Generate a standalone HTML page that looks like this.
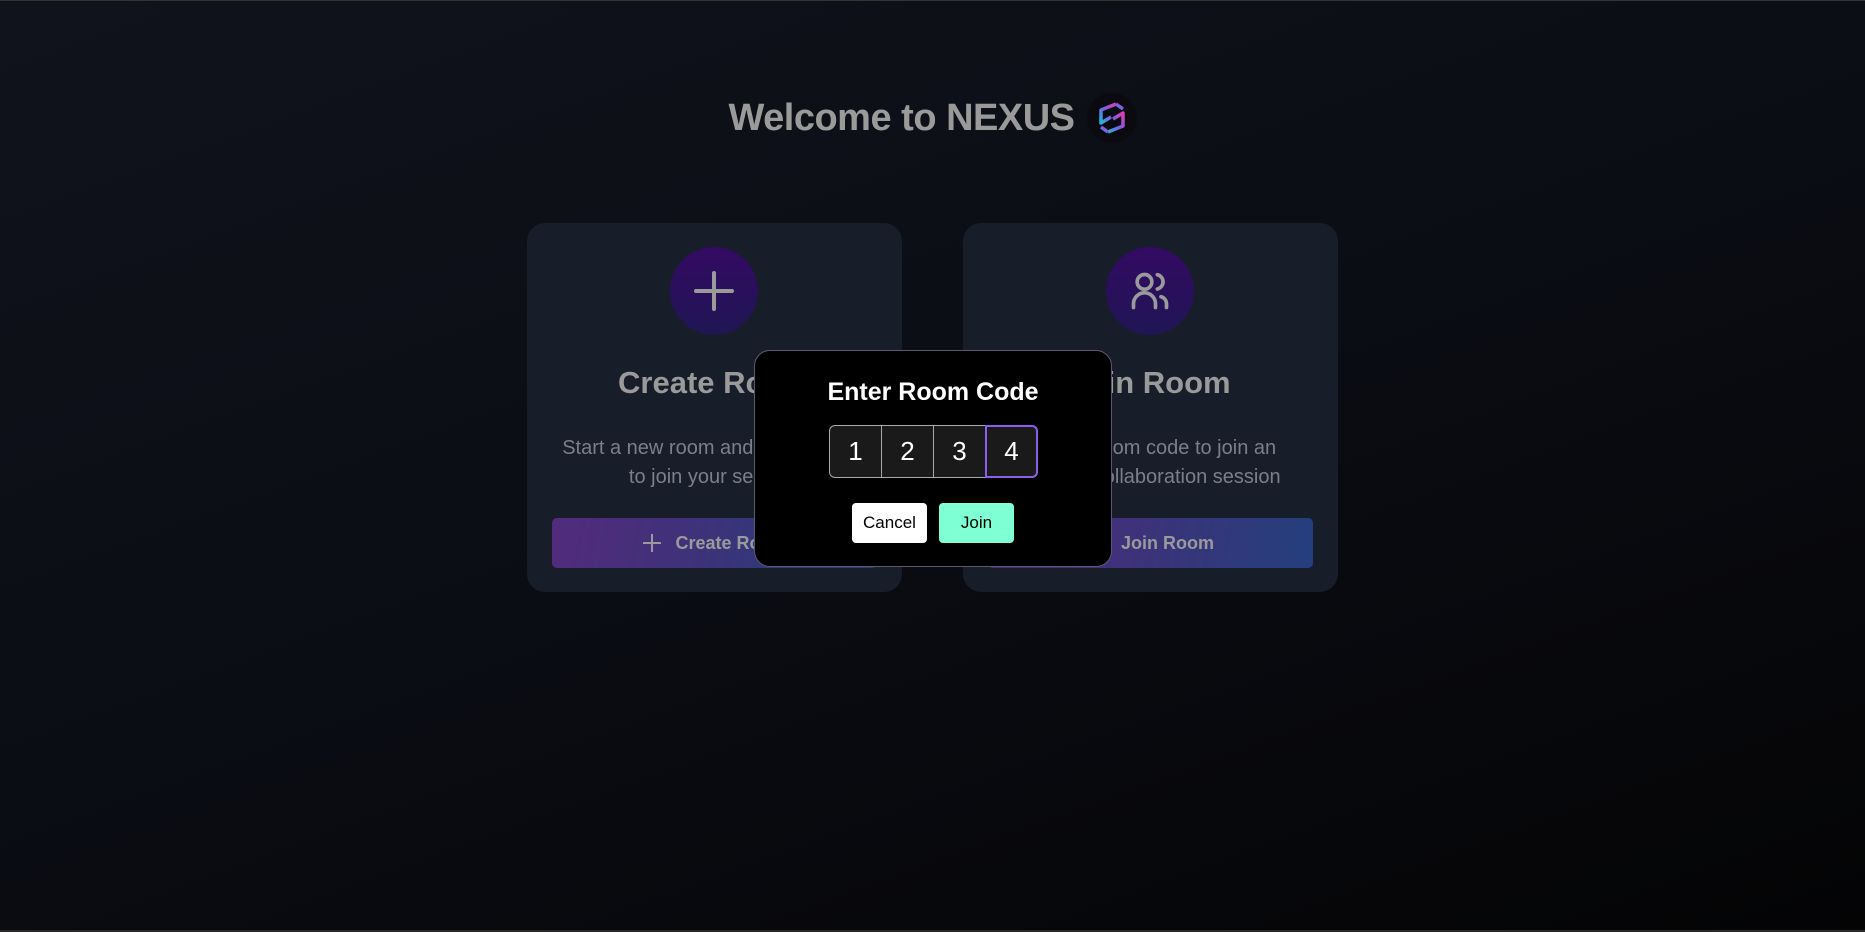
<!DOCTYPE html>
<html><head><meta charset="utf-8"><style>
*{box-sizing:border-box;margin:0;padding:0}
html,body{width:1865px;height:932px;overflow:hidden}
body{background:linear-gradient(160deg,#10131c 0%,#0b0d14 50%,#040405 100%);font-family:"Liberation Sans",sans-serif;position:relative;border-top:1px solid #333;border-bottom:2px solid #2a2a2a}
.title{position:absolute;top:90px;left:0;width:1865px;text-align:center;color:#9a9a9a;font-size:38px;font-weight:bold;letter-spacing:-0.5px;line-height:50px}
.title span{display:inline-block;vertical-align:middle}
.logo{width:50px;height:50px;border-radius:50%;background:#0a0a10;margin-left:12px;position:relative;line-height:0}
.logo svg{position:absolute;left:9px;top:8px;display:block}
.card{position:absolute;top:222px;width:375px;height:369px;background:#181d2a;border-radius:18px}
.ic{position:absolute;left:143px;top:24px;width:88px;height:88px;border-radius:50%;background:linear-gradient(#340a63,#1f1654);display:flex;align-items:center;justify-content:center}
.ct{position:absolute;top:142px;width:100%;text-align:center;color:#9a9a9a;font-size:31px;font-weight:bold}
.cd{position:absolute;top:211px;left:20px;right:20px;text-align:center;color:#7b7f88;font-size:20px;line-height:29px}
.btn{position:absolute;left:25px;right:25px;top:295px;height:50px;border-radius:5px;background:linear-gradient(100deg,#532b7c,#3b3379 50%,#243f7d);color:#9a9a9a;font-size:18px;font-weight:bold;display:flex;align-items:center;justify-content:center;gap:12px}
.modal{position:absolute;left:754px;top:349px;width:358px;height:217px;background:#000;border:1px solid #5c5870;border-radius:16px}
.mt{position:absolute;top:27px;width:100%;text-align:center;color:#fff;font-size:25px;font-weight:bold}
.codes{position:absolute;left:75px;top:74px;display:flex}
.codes div{width:53px;height:53px;background:#1a1a1a;border:1px solid #aaa;color:#fff;font-size:26px;display:flex;align-items:center;justify-content:center;margin-left:-1px}
.codes div:first-child{border-radius:6px 0 0 6px}
.codes div:last-child{border:2px solid #8f5cf0;border-radius:0 6px 6px 0}
.b{position:absolute;top:152px;height:40px;border-radius:4px;font-size:17px;display:flex;align-items:center;justify-content:center;color:#000}
</style></head><body>
<div class="title"><span>Welcome to NEXUS</span><span class="logo"><svg width="32" height="34" viewBox="0 0 32 34"><defs><linearGradient id="g" x1="0" y1="1" x2="1" y2="0"><stop offset="0" stop-color="#1fb5d6"/><stop offset=".5" stop-color="#7a5ce6"/><stop offset="1" stop-color="#e03fa8"/></linearGradient></defs><g fill="none" stroke="url(#g)" stroke-width="3.5" stroke-linejoin="round"><path d="M20 3 L5 9 L5 22 L15 16"/><path d="M12 31 L27 25 L27 12 L17 18"/><path d="M20 3 L27 8"/><path d="M12 31 L5 26"/></g></svg></span></div>

<div class="card" style="left:527px">
<div class="ic"><svg width="44" height="44" viewBox="0 0 44 44"><path d="M22 4V40M4 22H40" stroke="#9a9a9a" stroke-width="4" stroke-linecap="round"/></svg></div>
<div class="ct">Create Room</div>
<div class="cd">Start a new room and invite others<br>to join your session</div>
<div class="btn"><svg width="22" height="22" viewBox="0 0 22 22"><path d="M11 2V20M2 11H20" stroke="#9a9a9a" stroke-width="2"/></svg>Create Room</div>
</div>

<div class="card" style="left:963px">
<div class="ic"><svg width="44" height="44" viewBox="0 0 24 24" fill="none" stroke="#9a9a9a" stroke-width="2" stroke-linecap="round"><circle cx="9" cy="7" r="4"/><path d="M3 21v-2a6 6 0 0 1 12 0v2"/><path d="M16 3.1a4 4 0 0 1 0 7.8"/><path d="M21 21v-2a4 4 0 0 0-3-3.9"/></svg></div>
<div class="ct">Join Room</div>
<div class="cd">Enter a room code to join an<br>existing collaboration session</div>
<div class="btn"><svg width="22" height="22" viewBox="0 0 24 24" fill="none" stroke="#9a9a9a" stroke-width="2"><circle cx="9" cy="7" r="4"/><path d="M3 21v-2a6 6 0 0 1 12 0v2"/></svg>Join Room</div>
</div>

<div class="modal">
<div class="mt">Enter Room Code</div>
<div class="codes"><div>1</div><div>2</div><div>3</div><div>4</div></div>
<div class="b" style="left:97px;width:75px;background:#fff">Cancel</div>
<div class="b" style="left:184px;width:75px;background:#7fffd4">Join</div>
</div>
</body></html>
